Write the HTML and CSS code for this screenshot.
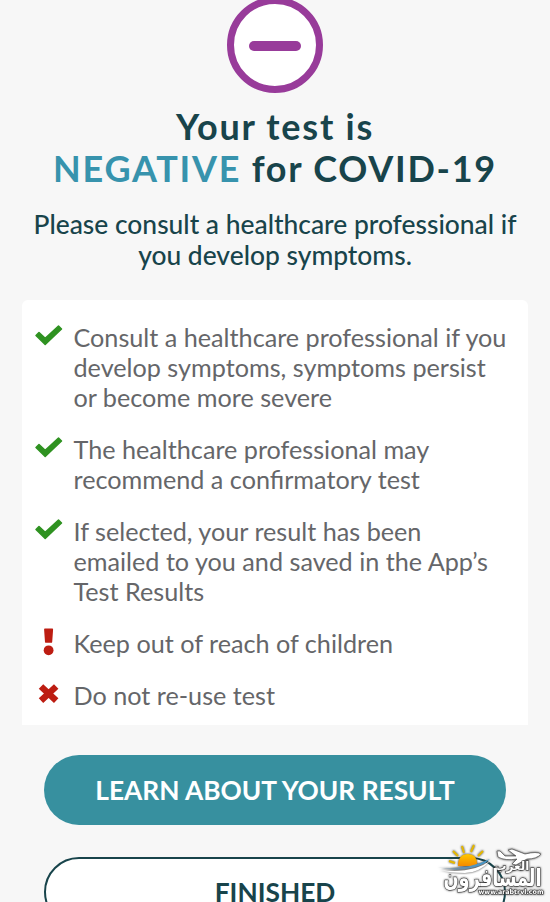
FILE: index.html
```
<!DOCTYPE html>
<html lang="en">
<head>
    <meta charset="UTF-8">
    <meta name="viewport" content="width=device-width, initial-scale=1.0">
    <title>Test Result</title>
    <link rel="stylesheet" href="styles.css">
</head>
<body>
    <main class="result">
        <div class="result-icon"><span></span></div>
        <h1>Your test is<br><span class="negative">NEGATIVE</span> for COVID-19</h1>
        <p class="intro">Please consult a healthcare professional if<br>you develop symptoms.</p>
        <ul class="advice">
            <li>
                <svg class="icon" viewBox="0 0 28 28"><path class="check" d="M1 11.500L4 8.500L10.200 14.200L23.500 2L26.500 5L10.200 20.500Z"/></svg>
                <p>Consult a healthcare professional if you<br>develop symptoms, symptoms persist<br>or become more severe</p>
            </li>
            <li>
                <svg class="icon" viewBox="0 0 28 28"><path class="check" d="M1 11.500L4 8.500L10.200 14.200L23.500 2L26.500 5L10.200 20.500Z"/></svg>
                <p>The healthcare professional may<br>recommend a confirmatory test</p>
            </li>
            <li>
                <svg class="icon" viewBox="0 0 28 28"><path class="check" d="M1 11.500L4 8.500L10.200 14.200L23.500 2L26.500 5L10.200 20.500Z"/></svg>
                <p>If selected, your result has been<br>emailed to you and saved in the App’s<br>Test Results</p>
            </li>
            <li>
                <svg class="icon" viewBox="0 -1 28 28"><path class="warn" d="M9.900-2.500h7.400q.9 0 .8.9l-.9 12.500q-.1.9-1 .9h-5.200q-.9 0-1-.9l-.9-12.500q-.1-.9.8-.9z"/><circle class="warn" cx="13.600" cy="19.300" r="4.900"/></svg>
                <p>Keep out of reach of children</p>
            </li>
            <li>
                <svg class="icon" viewBox="0 0 28 28"><path class="cross" d="M6 4.500L21.200 18.700M21.200 4.500L6 18.700"/></svg>
                <p>Do not re-use test</p>
            </li>
        </ul>
        <div class="buttons">
            <button class="btn btn-primary">LEARN ABOUT YOUR RESULT</button>
            <button class="btn btn-outline">FINISHED</button>
        </div>
    </main>

    <div class="watermark">
        <svg viewBox="0 0 120 70">
            <defs>
                <linearGradient id="sun" x1="0" y1="0" x2="0" y2="1">
                    <stop offset="0" stop-color="#ffc800"/>
                    <stop offset="1" stop-color="#f58a00"/>
                </linearGradient>
                <linearGradient id="wave">
                    <stop offset="0" stop-color="#9aa5ad" stop-opacity="0"/>
                    <stop offset=".4" stop-color="#6d8fa8"/>
                    <stop offset="1" stop-color="#3d9ad3"/>
                </linearGradient>
            </defs>
            <path class="rays" d="M19 29l6 2M23 19l5 5M32 14l2 7M44 13l-3 7M53 19l-5 5"/>
            <path class="sun" d="M28 34q0-12 10-12q9 0 9 10l-2 2z"/>
            <path class="wave" d="M6 35Q35 39 60 27Q52 35 35 37Q20 39 6 35z"/>
            <path class="foam" d="M10 38Q42 42 60 29Q49 41 35 41Q20 41 10 38z"/>
            <path class="plane" d="M67 19l3 0 5 5 11 0-8-6 4-1 13 5q12-3 16 0q-4 5-14 5l-11 6-4-1 5-5q-12 2-19-2z"/>
            <text class="arab-small" x="82" y="38">العرب</text>
            <text class="arab-big" x="62.500" y="54" textLength="98" lengthAdjust="spacingAndGlyphs">المسافرون</text>
            <text class="url" x="81" y="62" textLength="65" lengthAdjust="spacingAndGlyphs">www.arabtrvl.com</text>
        </svg>
    </div>
</body>
</html>
```
FILE: styles.css
```
* {
    box-sizing: border-box;
}
html {
    height: 100%;
    overflow: hidden;
}
body {
    margin: 0;
    height: 902px;
    overflow: hidden;
    position: relative;
    background-color: #f7f7f7;
    font-family: Lato, "Liberation Sans", sans-serif;
    color: #18444b;
}
.result {
    display: flex;
    flex-direction: column;
    align-items: center;
}
.result-icon {
    display: flex;
    align-items: center;
    justify-content: center;
    width: 96px;
    height: 96px;
    margin-top: -3px;
    border: 7px solid #983b9a;
    border-radius: 50%;
    background-color: #fff;
}
.result-icon span {
    width: 52px;
    height: 10px;
    margin-top: 1px;
    border-radius: 5px;
    background-color: #983b9a;
}
h1 {
    margin: 12px 0 0;
    font-size: 36px;
    line-height: 42px;
    font-weight: 700;
    letter-spacing: 1.75px;
    text-align: center;
    white-space: nowrap;
}
.negative {
    color: #3793ad;
}
.intro {
    margin: 20px 0 0;
    font-size: 26.4px;
    line-height: 31px;
    font-weight: 500;
    text-align: center;
    white-space: nowrap;
}
.advice {
    display: flex;
    flex-direction: column;
    gap: 22px;
    width: 506px;
    height: 425px;
    margin: 29px 0 0;
    padding: 22px 0 0 13px;
    list-style: none;
    border-radius: 6px 6px 0 0;
    background-color: #fff;
}
.advice li {
    display: flex;
    gap: 11px;
}
.advice p {
    margin: 0 0 0 -.5px;
    font-size: 25.2px;
    line-height: 30px;
    color: #656669;
    white-space: nowrap;
}
.icon {
    flex: none;
    width: 28px;
    height: 28px;
    margin-top: 2px;
    overflow: visible;
}
.check {
    fill: #2f9221;
    stroke: #2f9221;
    stroke-width: 1.5;
    stroke-linejoin: round;
}
.cross {
    fill: none;
    stroke: #bd1d12;
    stroke-width: 6.5;
}
.warn {
    fill: #bd1d12;
}
.buttons {
    display: flex;
    flex-direction: column;
    gap: 32px;
    width: 462px;
    margin-top: 30px;
}
.btn {
    height: 70px;
    padding: 0;
    border: none;
    border-radius: 35px;
    font-family: inherit;
    font-size: 26.3px;
    font-weight: 700;
    white-space: nowrap;
}
.btn-primary {
    color: #fff;
    background-color: #37909f;
}
.btn-outline {
    color: #18444b;
    background-color: #fff;
    border: 2px solid #18444b;
}
.watermark {
    position: absolute;
    right: 0;
    bottom: 0;
    width: 120px;
    height: 70px;
    filter: drop-shadow(0 0 1px #333);
}
.watermark svg {
    display: block;
}
.watermark text {
    font-family: "DejaVu Sans", sans-serif;
    font-weight: 700;
    fill: #fff;
    stroke: #333;
    stroke-width: 1px;
    paint-order: stroke;
    text-anchor: middle;
}
.watermark .arab-big {
    font-size: 24px;
}
.watermark .arab-small {
    font-size: 12px;
}
.watermark .url {
    font-size: 6.5px;
}
.rays {
    stroke: #e5b800;
    stroke-width: 2;
}
.sun {
    fill: url(#sun);
}
.wave {
    fill: url(#wave);
}
.foam,
.plane {
    fill: #fff;
}
.plane {
    stroke: #555;
    stroke-width: .7;
}
```
